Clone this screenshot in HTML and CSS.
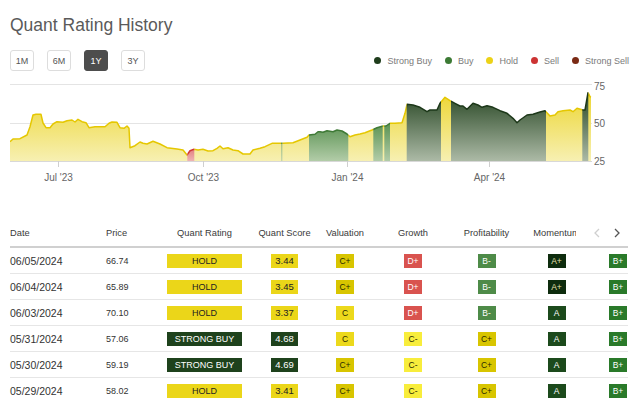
FILE: index.html
```html
<!DOCTYPE html>
<html>
<head>
<meta charset="utf-8">
<link rel="stylesheet" href="styles.css">
</head>
<body>
<div class="page">
  <h1 class="title">Quant Rating History</h1>
  <div class="controls">
    <div class="ranges">
      <button class="range">1M</button>
      <button class="range">6M</button>
      <button class="range active">1Y</button>
      <button class="range">3Y</button>
    </div>
    <ul class="legend">
      <li><span class="dot sb"></span>Strong Buy</li>
      <li><span class="dot buy"></span>Buy</li>
      <li><span class="dot hold"></span>Hold</li>
      <li><span class="dot sell"></span>Sell</li>
      <li><span class="dot ss"></span>Strong Sell</li>
    </ul>
  </div>
  <svg class="chart" width="620" height="105" viewBox="10 80 620 105">
    <defs>
      <linearGradient id="gy" gradientUnits="userSpaceOnUse" x1="0" y1="90" x2="0" y2="161">
        <stop offset="0" stop-color="#ecd52e"/>
        <stop offset="1" stop-color="#f7f0b2"/>
      </linearGradient>
      <linearGradient id="gg" gradientUnits="userSpaceOnUse" x1="0" y1="125" x2="0" y2="161">
        <stop offset="0" stop-color="#5e9556"/>
        <stop offset="1" stop-color="#b2cca8"/>
      </linearGradient>
      <linearGradient id="gd" gradientUnits="userSpaceOnUse" x1="0" y1="95" x2="0" y2="161">
        <stop offset="0" stop-color="#2c4a28"/>
        <stop offset="1" stop-color="#acbaa6"/>
      </linearGradient>
      <linearGradient id="gr" gradientUnits="userSpaceOnUse" x1="0" y1="148" x2="0" y2="161">
        <stop offset="0" stop-color="#e27a7a"/>
        <stop offset="1" stop-color="#efb4b4"/>
      </linearGradient>
      <clipPath id="area">
        <polygon points="10,141.7 13,139 20,138.7 27,135 30,126.7 33,115 36,114.3 41,114.3 43,123 46,127.7 50,127.7 53,124 57,121.7 63,122.3 67,120.7 72,120 75,122 78,119.3 82,121.7 86,122.7 89,127.7 95,126.7 105,126.7 109,123.3 112,122 117,122.3 120,127.7 124,128.3 127,126 129,128.3 130,147.7 135,145.7 140,142 143,143.3 147,144 153,141.3 160,144 167,147.7 177,149 183,150 187,155 190,150.7 194,149.3 198,150 203,149.3 208,151 213,150.7 217,148.3 220,146 223,148.7 228,147.7 233,150 238,150.7 243,154 250,154 253,150 260,148.3 265,146.7 272,143.3 283,143.3 293,142.7 300,140 307,137.3 309,135 315,134.3 318,131.7 320,131.7 323,132.3 327,130.7 333,131.7 337,130 342,131 347,134 350,136.7 355,135 360,134 365,132.7 372,130 377,127.7 383,126 386,126 390,123.3 395,123.3 402,122.7 405,113.3 407,104.3 413,105 420,107.3 427,111.7 430,110 437,110 440,103.3 445,97.3 450,100.7 455,103.3 460,106 463,106 467,109.3 473,103.3 478,105 482,107.3 487,105.7 493,107.3 500,110.7 507,113.3 513,118.3 517,122.7 520,120 527,115 533,114.3 540,112 545,110.7 550,116 555,115 558,111.7 563,110.7 570,110 573,111.7 577,108.3 583,110 585,110 588,92.7 590,96.7 591,97 591,161 10,161"/>
      </clipPath>
      <clipPath id="cy">
        <rect x="8" y="80" width="179.3" height="90"/>
        <rect x="194.3" y="80" width="87" height="90"/>
        <rect x="282.3" y="80" width="26.7" height="90"/>
        <rect x="348.3" y="80" width="25" height="90"/>
        <rect x="382.7" y="80" width="1.6" height="90"/>
        <rect x="390" y="80" width="16.7" height="90"/>
        <rect x="441" y="80" width="10" height="90"/>
        <rect x="546" y="80" width="36.3" height="90"/>
        <rect x="588.3" y="80" width="5" height="90"/>
      </clipPath>
      <clipPath id="cr">
        <rect x="187.3" y="80" width="7" height="90"/>
      </clipPath>
      <clipPath id="cg">
        <rect x="281.3" y="80" width="1" height="90"/>
        <rect x="309" y="80" width="39.3" height="90"/>
        <rect x="373.3" y="80" width="9.4" height="90"/>
        <rect x="384.3" y="80" width="5.7" height="90"/>
      </clipPath>
      <clipPath id="cd">
        <rect x="406.7" y="80" width="34.3" height="90"/>
        <rect x="451" y="80" width="95" height="90"/>
        <rect x="582.3" y="80" width="6" height="90"/>
      </clipPath>
      <polyline id="ln" fill="none" stroke-width="1.5" stroke-linejoin="round" points="10,141.7 13,139 20,138.7 27,135 30,126.7 33,115 36,114.3 41,114.3 43,123 46,127.7 50,127.7 53,124 57,121.7 63,122.3 67,120.7 72,120 75,122 78,119.3 82,121.7 86,122.7 89,127.7 95,126.7 105,126.7 109,123.3 112,122 117,122.3 120,127.7 124,128.3 127,126 129,128.3 130,147.7 135,145.7 140,142 143,143.3 147,144 153,141.3 160,144 167,147.7 177,149 183,150 187,155 190,150.7 194,149.3 198,150 203,149.3 208,151 213,150.7 217,148.3 220,146 223,148.7 228,147.7 233,150 238,150.7 243,154 250,154 253,150 260,148.3 265,146.7 272,143.3 283,143.3 293,142.7 300,140 307,137.3 309,135 315,134.3 318,131.7 320,131.7 323,132.3 327,130.7 333,131.7 337,130 342,131 347,134 350,136.7 355,135 360,134 365,132.7 372,130 377,127.7 383,126 386,126 390,123.3 395,123.3 402,122.7 405,113.3 407,104.3 413,105 420,107.3 427,111.7 430,110 437,110 440,103.3 445,97.3 450,100.7 455,103.3 460,106 463,106 467,109.3 473,103.3 478,105 482,107.3 487,105.7 493,107.3 500,110.7 507,113.3 513,118.3 517,122.7 520,120 527,115 533,114.3 540,112 545,110.7 550,116 555,115 558,111.7 563,110.7 570,110 573,111.7 577,108.3 583,110 585,110 588,92.7 590,96.7 591,97"/>
    </defs>
    <g class="grid">
      <line x1="10" y1="84.5" x2="592" y2="84.5"/>
      <line x1="10" y1="123.5" x2="592" y2="123.5"/>
    </g>
    <g clip-path="url(#area)">
      <rect x="8" y="80" width="586" height="82" fill="url(#gy)"/>
      <g clip-path="url(#cr)"><rect x="8" y="80" width="586" height="82" fill="url(#gr)"/></g>
      <g clip-path="url(#cg)"><rect x="8" y="80" width="586" height="82" fill="url(#gg)"/></g>
      <g clip-path="url(#cd)"><rect x="8" y="80" width="586" height="82" fill="url(#gd)"/></g>
    </g>
    <g clip-path="url(#cy)"><use href="#ln" stroke="#e5c700"/></g>
    <g clip-path="url(#cr)"><use href="#ln" stroke="#d03a3a"/></g>
    <g clip-path="url(#cg)"><use href="#ln" stroke="#3f7a37"/></g>
    <g clip-path="url(#cd)"><use href="#ln" stroke="#1d381a"/></g>
    <line class="axis" x1="10" y1="161.5" x2="592" y2="161.5"/>
    <g class="ticks">
      <line x1="58.5" y1="161" x2="58.5" y2="167"/>
      <line x1="203.5" y1="161" x2="203.5" y2="167"/>
      <line x1="347.5" y1="161" x2="347.5" y2="167"/>
      <line x1="489.5" y1="161" x2="489.5" y2="167"/>
    </g>
    <g class="ylab">
      <text x="594" y="90">75</text>
      <text x="594" y="127">50</text>
      <text x="594" y="165">25</text>
    </g>
    <g class="xlab">
      <text x="58.5" y="181">Jul '23</text>
      <text x="203.5" y="181">Oct '23</text>
      <text x="347.5" y="181">Jan '24</text>
      <text x="489.5" y="181">Apr '24</text>
    </g>
  </svg>

  <div class="table">
    <div class="row head">
      <div class="c c1">Date</div>
      <div class="c c2">Price</div>
      <div class="c cc">Quant Rating</div>
      <div class="c cc">Quant Score</div>
      <div class="c cc">Valuation</div>
      <div class="c cc">Growth</div>
      <div class="c cc">Profitability</div>
      <div class="c cc">Momentum</div>
      <div class="c ce">Revisions</div>
      <div class="pager">
        <svg width="8" height="10" viewBox="0 0 8 10"><path d="M6 1 L2 5 L6 9" fill="none" stroke="#cfcfcf" stroke-width="1.3"/></svg>
        <svg width="8" height="10" viewBox="0 0 8 10"><path d="M2 1 L6 5 L2 9" fill="none" stroke="#555" stroke-width="1.3"/></svg>
      </div>
    </div>

    <div class="row">
      <div class="c c1 date">06/05/2024</div>
      <div class="c c2 price">66.74</div>
      <div class="c cc"><span class="rating hold">HOLD</span></div>
      <div class="c cc"><span class="score hold">3.44</span></div>
      <div class="c cc"><span class="g cp">C+</span></div>
      <div class="c cc"><span class="g dp">D+</span></div>
      <div class="c cc"><span class="g bm">B-</span></div>
      <div class="c cc"><span class="g ap">A+</span></div>
      <div class="c ce"><span class="g bp">B+</span></div>
    </div>
    <div class="row">
      <div class="c c1 date">06/04/2024</div>
      <div class="c c2 price">65.89</div>
      <div class="c cc"><span class="rating hold">HOLD</span></div>
      <div class="c cc"><span class="score hold">3.45</span></div>
      <div class="c cc"><span class="g cp">C+</span></div>
      <div class="c cc"><span class="g dp">D+</span></div>
      <div class="c cc"><span class="g bm">B-</span></div>
      <div class="c cc"><span class="g ap">A+</span></div>
      <div class="c ce"><span class="g bp">B+</span></div>
    </div>
    <div class="row">
      <div class="c c1 date">06/03/2024</div>
      <div class="c c2 price">70.10</div>
      <div class="c cc"><span class="rating hold">HOLD</span></div>
      <div class="c cc"><span class="score hold">3.37</span></div>
      <div class="c cc"><span class="g c0">C</span></div>
      <div class="c cc"><span class="g dp">D+</span></div>
      <div class="c cc"><span class="g bm">B-</span></div>
      <div class="c cc"><span class="g a0">A</span></div>
      <div class="c ce"><span class="g bp">B+</span></div>
    </div>
    <div class="row">
      <div class="c c1 date">05/31/2024</div>
      <div class="c c2 price">57.06</div>
      <div class="c cc"><span class="rating sbuy">STRONG BUY</span></div>
      <div class="c cc"><span class="score sbuy">4.68</span></div>
      <div class="c cc"><span class="g c0">C</span></div>
      <div class="c cc"><span class="g cm">C-</span></div>
      <div class="c cc"><span class="g cp">C+</span></div>
      <div class="c cc"><span class="g a0">A</span></div>
      <div class="c ce"><span class="g bp">B+</span></div>
    </div>
    <div class="row">
      <div class="c c1 date">05/30/2024</div>
      <div class="c c2 price">59.19</div>
      <div class="c cc"><span class="rating sbuy">STRONG BUY</span></div>
      <div class="c cc"><span class="score sbuy">4.69</span></div>
      <div class="c cc"><span class="g cp">C+</span></div>
      <div class="c cc"><span class="g cm">C-</span></div>
      <div class="c cc"><span class="g cp">C+</span></div>
      <div class="c cc"><span class="g a0">A</span></div>
      <div class="c ce"><span class="g bp">B+</span></div>
    </div>
    <div class="row">
      <div class="c c1 date">05/29/2024</div>
      <div class="c c2 price">58.02</div>
      <div class="c cc"><span class="rating hold">HOLD</span></div>
      <div class="c cc"><span class="score hold">3.41</span></div>
      <div class="c cc"><span class="g cp">C+</span></div>
      <div class="c cc"><span class="g cm">C-</span></div>
      <div class="c cc"><span class="g cp">C+</span></div>
      <div class="c cc"><span class="g a0">A</span></div>
      <div class="c ce"><span class="g bp">B+</span></div>
    </div>
  </div>
</div>
</body>
</html>
```

FILE: styles.css
```css
* { box-sizing: border-box; }
html, body { margin: 0; padding: 0; background: #fff; }
body {
  font-family: "Liberation Sans", Arial, sans-serif;
  color: #333;
  width: 640px;
  height: 402px;
  overflow: hidden;
}
.page { padding: 15px 10px 0 10px; }

.title {
  margin: 0;
  font-size: 17.5px;
  line-height: 20px;
  font-weight: normal;
  color: #5a5a5a;
}

.controls {
  margin-top: 15px;
  height: 21px;
  display: flex;
  align-items: center;
  justify-content: space-between;
}
.ranges { display: flex; gap: 13px; }
.range {
  font-family: "Liberation Sans", Arial, sans-serif;
  width: 24px;
  height: 21px;
  padding: 0;
  border: 1px solid #ddd;
  border-radius: 3px;
  background: #fff;
  color: #555;
  font-size: 9px;
}
.range.active { background: #4d4d4d; border-color: #4d4d4d; color: #fff; }

.legend {
  list-style: none;
  margin: 0;
  padding: 0 1px 0 0;
  display: flex;
  gap: 13px;
  font-size: 9px;
  color: #7a7a7a;
}
.legend li { display: flex; align-items: center; gap: 6px; }
.dot { width: 7px; height: 7px; border-radius: 50%; display: inline-block; }
.dot.sb { background: #1f3d1c; }
.dot.buy { background: #3c7a34; }
.dot.hold { background: #ecd217; }
.dot.sell { background: #cc3333; }
.dot.ss { background: #7a2a14; }

.chart { display: block; margin-top: 9px; }
.grid line { stroke: #e4e4e4; stroke-width: 1; }
.axis { stroke: #d8d8d8; stroke-width: 1; }
.ticks line { stroke: #cfcfcf; stroke-width: 1; }
.ylab text { font-size: 10px; fill: #666; font-family: "Liberation Sans", Arial, sans-serif; }
.xlab text { font-size: 10px; fill: #666; text-anchor: middle; font-family: "Liberation Sans", Arial, sans-serif; }

.table { margin-top: 35px; width: 618px; }
.row {
  position: relative;
  display: grid;
  grid-template-columns: 96px 54px 89px 71px 50px 86px 61px 79px 32px;
  height: 26px;
  align-items: center;
  border-bottom: 1px solid #e6e6e6;
}
.row.head {
  height: 28px;
  border-bottom: 2px solid #d0d0d0;
  font-size: 9.3px;
  color: #3a3a3a;
}
.c { white-space: nowrap; }
.cc { text-align: center; }
.ce { text-align: right; padding-right: 1px; }
.head .ce { visibility: hidden; }
.date { font-size: 10.5px; color: #333; }
.price { font-size: 9px; color: #333; }

.pager {
  position: absolute;
  right: -2px;
  top: 0;
  width: 54px;
  height: 26px;
  background: #fff;
  display: flex;
  align-items: center;
  justify-content: space-between;
  padding: 0 9px 0 17px;
}
.pager svg { display: block; }

.rating, .score, .g {
  display: inline-block;
  height: 14px;
  line-height: 14px;
  font-size: 9px;
  text-align: center;
  vertical-align: middle;
}
.rating { width: 75px; }
.score { width: 27px; font-size: 9.5px; }
.g { width: 18px; font-size: 8.5px; }

.hold { background: #ebd619; color: #222; }
.sbuy { background: #1e421c; color: #fff; }
.cp { background: #d8c500; color: #2a2a00; }
.c0 { background: #ecd91c; color: #2a2a00; }
.cm { background: #f8ed3c; color: #2a2a00; }
.dp { background: #d9534f; color: #fff; }
.bm { background: #4e8b48; color: #fff; }
.ap { background: #0e2c0e; color: #e8e2b0; }
.a0 { background: #1c4a1c; color: #fff; }
.bp { background: #2a7a2a; color: #fff; }
```
